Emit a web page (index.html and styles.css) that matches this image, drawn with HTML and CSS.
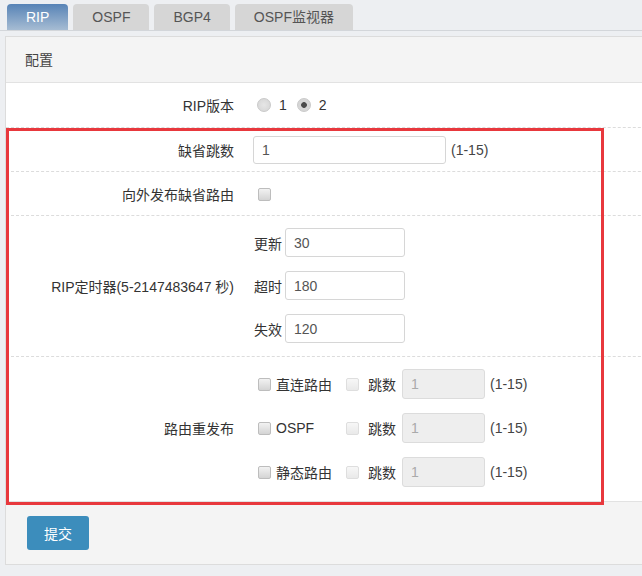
FILE: index.html
```html
<!DOCTYPE html>
<html lang="zh-CN">
<head>
<meta charset="utf-8">
<title>RIP</title>
<link rel="stylesheet" href="styles.css">
</head>
<body>
<div class="tabs">
  <div class="tab active">RIP</div>
  <div class="tab">OSPF</div>
  <div class="tab">BGP4</div>
  <div class="tab">OSPF监视器</div>
</div>
<div class="panel">
  <div class="panel-head">配置</div>
  <div class="panel-body">
    <div class="row r-first">
      <div class="label">RIP版本</div>
      <div class="field">
        <label class="opt"><input type="radio" name="ver" class="radio"><span>1</span></label>
        <label class="opt"><input type="radio" name="ver" class="radio" checked><span>2</span></label>
      </div>
    </div>
    <div class="row">
      <div class="label">缺省跳数</div>
      <div class="field">
        <input type="text" class="text wide" value="1">
        <span class="hint">(1-15)</span>
      </div>
    </div>
    <div class="row">
      <div class="label">向外发布缺省路由</div>
      <div class="field">
        <input type="checkbox" class="check">
      </div>
    </div>
    <div class="row r-multi">
      <div class="label">RIP定时器(5-2147483647 秒)</div>
      <div class="field lines">
        <div class="line"><span class="sub">更新</span><input type="text" class="text timer" value="30"></div>
        <div class="line"><span class="sub">超时</span><input type="text" class="text timer" value="180"></div>
        <div class="line"><span class="sub">失效</span><input type="text" class="text timer" value="120"></div>
      </div>
    </div>
    <div class="row r-multi r-last">
      <div class="label">路由重发布</div>
      <div class="field lines">
        <div class="line">
          <input type="checkbox" class="check"><span class="proto">直连路由</span>
          <input type="checkbox" class="check dis" disabled><span class="sub2">跳数</span>
          <input type="text" class="text hop" value="1" disabled>
          <span class="hint">(1-15)</span>
        </div>
        <div class="line">
          <input type="checkbox" class="check"><span class="proto">OSPF</span>
          <input type="checkbox" class="check dis" disabled><span class="sub2">跳数</span>
          <input type="text" class="text hop" value="1" disabled>
          <span class="hint">(1-15)</span>
        </div>
        <div class="line">
          <input type="checkbox" class="check"><span class="proto">静态路由</span>
          <input type="checkbox" class="check dis" disabled><span class="sub2">跳数</span>
          <input type="text" class="text hop" value="1" disabled>
          <span class="hint">(1-15)</span>
        </div>
      </div>
    </div>
    <div class="highlight"></div>
  </div>
  <div class="panel-foot">
    <button type="button" class="btn">提交</button>
  </div>
</div>
</body>
</html>
```
FILE: styles.css
```css
html, body {
  margin: 0;
  padding: 0;
}
body {
  background: #edeff2;
  font-family: "Liberation Sans", "Noto Sans CJK SC", sans-serif;
  font-size: 14px;
  color: #333;
  overflow: hidden;
  width: 642px;
  height: 576px;
}
.tabs {
  display: flex;
  gap: 5px;
  padding: 4px 0 0 7px;
  border-bottom: 1px solid #d3d6da;
}
.tab {
  height: 26px;
  line-height: 27px;
  padding: 0 19px;
  background: #d6d6d6;
  color: #555;
  font-size: 14px;
  border-radius: 4px 4px 0 0;
}
.tab.active {
  background: linear-gradient(#5783b6, #a6bcd3);
  color: #fff;
}
.panel {
  margin: 5px 0 0 5px;
  width: 700px;
  background: #fff;
  border: 1px solid #dcdcdc;
}
.panel-head {
  height: 45px;
  line-height: 46px;
  padding-left: 19px;
  background: #f4f4f4;
  border-bottom: 1px solid #e2e2e2;
  font-size: 14px;
  color: #444;
}
.panel-body {
  position: relative;
}
.row {
  display: flex;
  align-items: center;
  padding: 8px 0 7px;
  border-bottom: 1px dashed #dcdcdc;
}
.row.r-first {
  padding-bottom: 8px;
}
.row.r-multi {
  padding: 12px 0 13px;
}
.row.r-last {
  border-bottom: none;
  padding-bottom: 14px;
}
.label {
  width: 228px;
  flex: none;
  text-align: right;
  margin-right: 19px;
}
.field {
  display: flex;
  align-items: center;
  min-height: 28px;
}
.lines {
  flex-direction: column;
  align-items: flex-start;
  gap: 14px;
}
.line {
  display: flex;
  align-items: center;
}
.opt {
  display: flex;
  align-items: center;
}
.opt span {
  margin: 0 10px 0 8px;
  color: #333;
}
.radio {
  appearance: none;
  -webkit-appearance: none;
  width: 14px;
  height: 14px;
  margin: 0 0 0 4px;
  border: 1px solid #c9c9c9;
  border-radius: 50%;
  background: radial-gradient(circle, #e6e6e6 0, #d4d4d4 100%);
  box-sizing: border-box;
}
.radio:checked {
  background: radial-gradient(circle, #4a4a4a 0, #4a4a4a 2.5px, #d6d6d6 3.2px, #d6d6d6 100%);
}
.opt + .opt .radio {
  margin-left: 0;
}
.check {
  appearance: none;
  -webkit-appearance: none;
  width: 13px;
  height: 13px;
  margin: 0 0 0 5px;
  border: 1px solid #bdbdbd;
  border-radius: 2px;
  background: linear-gradient(#f2f2f2, #d4d4d4);
  box-sizing: border-box;
}
.check.dis {
  border-color: #dedede;
  background: linear-gradient(#f7f7f7, #e9e9e9);
  margin-left: 0;
}
.text {
  box-sizing: border-box;
  height: 29px;
  border: 1px solid #d6d6d6;
  border-radius: 3px;
  padding: 0 8px;
  font-family: inherit;
  font-size: 14px;
  color: #555;
  background: #fff;
  margin: 0;
}
.text.wide {
  width: 193px;
  height: 28px;
}
.text.timer {
  width: 120px;
}
.text.hop {
  width: 83px;
  height: 30px;
  background: #eeeeee;
  color: #aaa;
  border-color: #dcdcdc;
}
.hint {
  margin-left: 5px;
  color: #444;
}
.sub {
  margin: 0 3px 0 1px;
}
.proto {
  width: 70px;
  margin-left: 5px;
}
.sub2 {
  margin: 0 6px 0 9px;
}
.highlight {
  position: absolute;
  left: 0;
  top: 45px;
  width: 592px;
  height: 371px;
  border: 3px solid #e8383d;
  pointer-events: none;
}
.panel-foot {
  background: #f4f4f4;
  border-top: 1px solid #e2e2e2;
  padding: 14px 0 14px 21px;
}
.btn {
  width: 62px;
  height: 34px;
  border: none;
  border-radius: 3px;
  background: #3c8dbc;
  color: #fff;
  font-family: inherit;
  font-size: 14px;
  padding: 0;
}
```
